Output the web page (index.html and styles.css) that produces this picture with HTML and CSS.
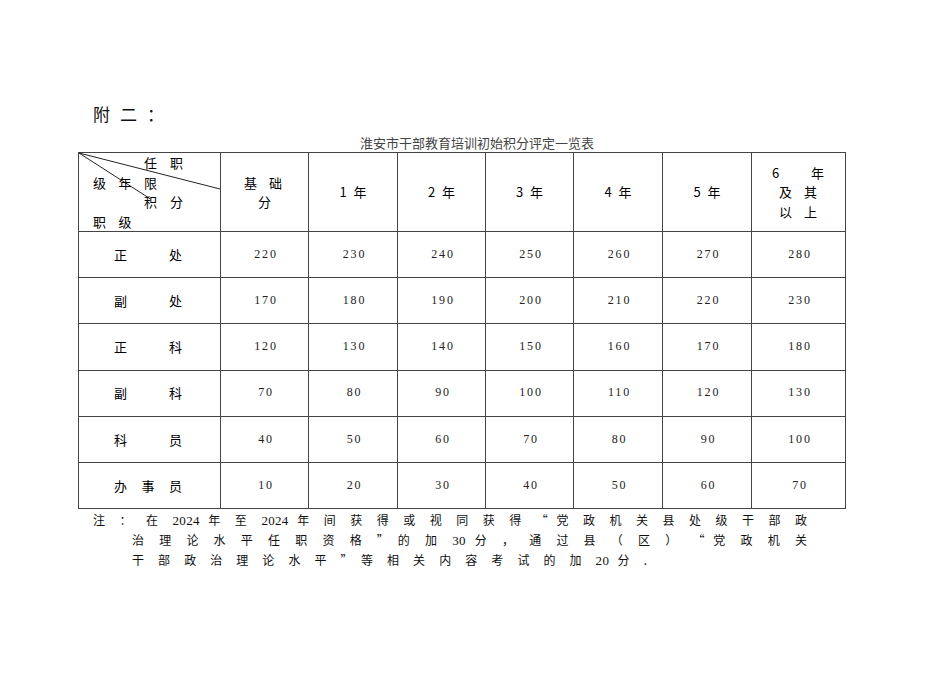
FILE: index.html
```html
<!DOCTYPE html>
<html lang="zh-CN">
<head>
<meta charset="utf-8">
<title>淮安市干部教育培训初始积分评定一览表</title>
<link rel="stylesheet" href="styles.css">
</head>
<body>
<div class="page">
  <div class="title">附二：</div>
  <div class="caption">淮安市干部教育培训初始积分评定一览表</div>
  <table class="grid">
    <colgroup>
      <col class="c-corner"><col class="c-base"><col class="c-y1"><col class="c-y2"><col class="c-y3"><col class="c-y4"><col class="c-y5"><col class="c-y6">
    </colgroup>
    <thead>
      <tr class="head">
        <th class="corner">
          <svg class="diag" viewBox="0 0 142 78" preserveAspectRatio="none" aria-hidden="true">
            <line x1="0" y1="0" x2="142" y2="36" stroke="#222" stroke-width="1"/>
            <line x1="0" y1="0" x2="72" y2="46" stroke="#222" stroke-width="1"/>
          </svg>
          <div class="cl cl-r">任职</div>
          <div class="cl cl-l">级年限</div>
          <div class="cl cl-r">积分</div>
          <div class="cl cl-l">职级</div>
        </th>
        <th><div class="spread">基础</div><div>分</div></th>
        <th class="yr">1 年</th>
        <th class="yr">2 年</th>
        <th class="yr">3 年</th>
        <th class="yr">4 年</th>
        <th class="yr">5 年</th>
        <th class="last">
          <div class="six"><span>6</span><span>年</span></div>
          <div class="spread2">及其</div>
          <div class="spread2">以上</div>
        </th>
      </tr>
    </thead>
    <tbody>
      <tr class="r46"><td><div class="lab"><span>正</span><span>处</span></div></td><td class="num">220</td><td class="num">230</td><td class="num">240</td><td class="num">250</td><td class="num">260</td><td class="num">270</td><td class="num">280</td></tr>
      <tr class="r46"><td><div class="lab"><span>副</span><span>处</span></div></td><td class="num">170</td><td class="num">180</td><td class="num">190</td><td class="num">200</td><td class="num">210</td><td class="num">220</td><td class="num">230</td></tr>
      <tr class="r47"><td><div class="lab"><span>正</span><span>科</span></div></td><td class="num">120</td><td class="num">130</td><td class="num">140</td><td class="num">150</td><td class="num">160</td><td class="num">170</td><td class="num">180</td></tr>
      <tr class="r46"><td><div class="lab"><span>副</span><span>科</span></div></td><td class="num">70</td><td class="num">80</td><td class="num">90</td><td class="num">100</td><td class="num">110</td><td class="num">120</td><td class="num">130</td></tr>
      <tr class="r47"><td><div class="lab"><span>科</span><span>员</span></div></td><td class="num">40</td><td class="num">50</td><td class="num">60</td><td class="num">70</td><td class="num">80</td><td class="num">90</td><td class="num">100</td></tr>
      <tr class="r46"><td><div class="lab"><span>办</span><span>事</span><span>员</span></div></td><td class="num">10</td><td class="num">20</td><td class="num">30</td><td class="num">40</td><td class="num">50</td><td class="num">60</td><td class="num">70</td></tr>
    </tbody>
  </table>
  <div class="notes">
    <div class="nl n1">注 ： 在 <span class="d">2024</span> 年 至 <span class="d">2024</span> 年 间 获 得 或 视 同 获 得 “ 党 政 机 关 县 处 级 干 部 政</div>
    <div class="nl n2">治 理 论 水 平 任 职 资 格 ” 的 加 <span class="d">30</span> 分 ， 通 过 县 （ 区 ） “ 党 政 机 关</div>
    <div class="nl n3">干 部 政 治 理 论 水 平 ” 等 相 关 内 容 考 试 的 加 <span class="d">20</span> 分 .</div>
  </div>
</div>
</body>
</html>
```

FILE: styles.css
```css
html, body {
  margin: 0;
  background: #ffffff;
}

body {
  color: #000;
  font-family: "Noto Sans CJK SC", "DejaVu Sans", sans-serif;
}

.page {
  padding: 102px 0 0 78px;
}

.title {
  font-size: 17px;
  line-height: 24px;
  height: 24px;
  letter-spacing: 10px;
  padding-left: 15px;
  color: #111;
}

.caption {
  margin: 9px 0 0 282px;
  font-size: 13px;
  line-height: 16px;
  color: #444;
}

.grid {
  margin-top: 1px;
  border-collapse: collapse;
  table-layout: fixed;
  width: 768px;
  border: 1px solid #333;
}

.c-corner { width: 142px; }
.c-base { width: 88px; }
.c-y1 { width: 89px; }
.c-y2 { width: 88px; }
.c-y3 { width: 88px; }
.c-y4 { width: 89px; }
.c-y5 { width: 89px; }
.c-y6 { width: 94px; }

.grid th,
.grid td {
  border: 1px solid #444;
  padding: 0;
  font-weight: normal;
  font-size: 13px;
  line-height: 19.5px;
  text-align: center;
  vertical-align: middle;
}

.head {
  height: 76px;
}

.r46 { height: 46px; }
.r47 { height: 46.5px; }

.grid th.corner {
  position: relative;
  vertical-align: top;
  text-align: left;
  padding-top: 0;
}

.diag {
  position: absolute;
  left: 0;
  top: 0;
  width: 100%;
  height: 100%;
  overflow: visible;
}

.cl {
  position: relative;
  white-space: nowrap;
}

.cl-r {
  padding-left: 65px;
  letter-spacing: 13px;
}

.cl-l {
  padding-left: 14px;
  letter-spacing: 12.5px;
}

.spread {
  letter-spacing: 12px;
  padding-left: 9px;
}

.yr {
  word-spacing: 4px;
}

.grid th.last {
  text-align: left;
  padding-left: 20px;
}

.six {
  display: flex;
  justify-content: space-between;
  width: 52px;
}

.spread2 {
  padding-left: 7px;
  letter-spacing: 12px;
}

.lab {
  display: flex;
  justify-content: space-between;
  width: 68px;
  margin-left: 35px;
}

.grid td.num {
  font-family: "Liberation Serif", "Times New Roman", serif;
  font-size: 12px;
  letter-spacing: 1.8px;
  padding-left: 3px;
  color: #222;
}

.notes {
  margin-top: 1px;
  font-size: 12px;
  line-height: 19px;
  color: #111;
}

.d {
  font-family: "Liberation Serif", "Times New Roman", serif;
  font-size: 13px;
  letter-spacing: 0.3px;
}

.nl {
  text-align: justify;
  text-align-last: justify;
}

.n1 {
  margin-left: 15px;
  width: 714px;
}

.n2 {
  margin-left: 54px;
  width: 675px;
}

.n3 {
  margin-left: 54px;
  width: 515px;
}
```
